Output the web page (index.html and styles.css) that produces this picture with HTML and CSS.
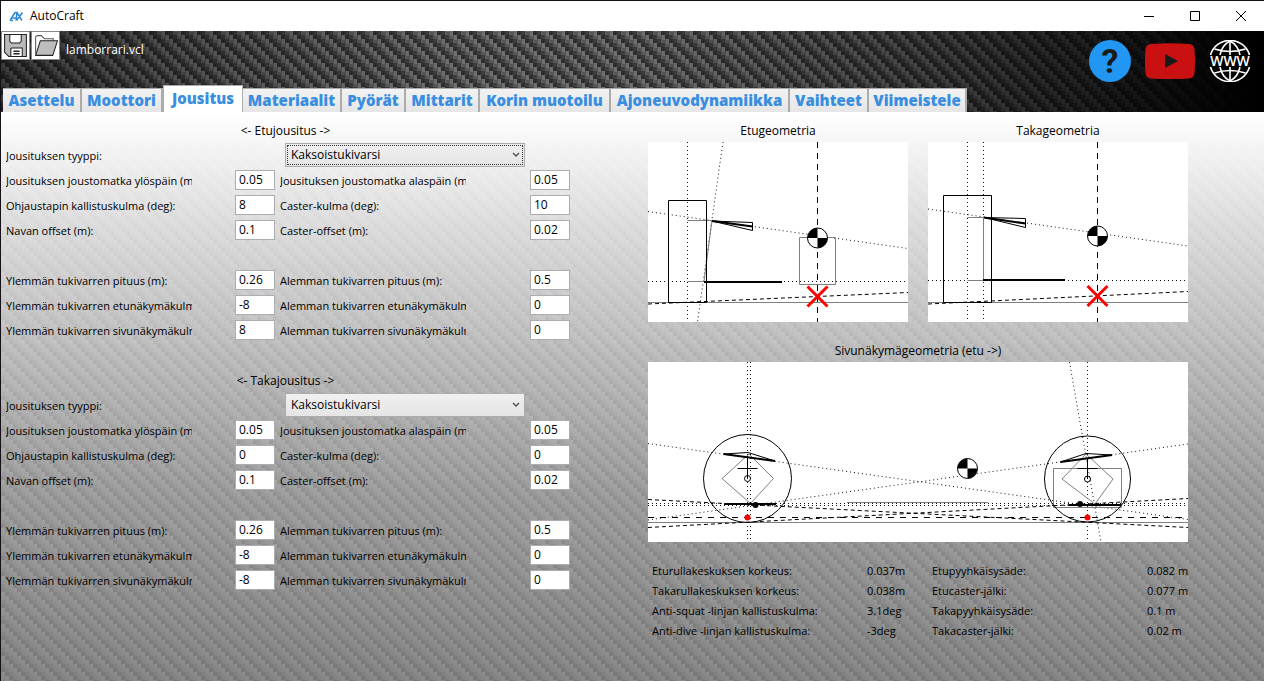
FILE: index.html
```html
<!DOCTYPE html>
<html lang="fi">
<head>
<meta charset="utf-8">
<meta name="viewport" content="width=device-width, initial-scale=1">
<title>AutoCraft</title>
<link rel="stylesheet" href="styles.css">
</head>
<body>
<div class="window">
  <div class="titlebar">
    <svg class="logo" viewBox="0 0 15 11" aria-hidden="true">
      <path d="M1 9.500 6 1.500H8L7 9.500M3 7H7.500M8 1.500 13 9.500M13.500 1.500 7.500 9.500M4 9.500H1" fill="none" stroke="#2f86d6" stroke-width="1.500"/>
    </svg>
    <span class="app-name">AutoCraft</span>
    <div class="window-buttons">
      <button type="button" aria-label="Pienennä"><svg viewBox="0 0 12 12"><path d="M1 6.500H11" /></svg></button>
      <button type="button" aria-label="Suurenna"><svg viewBox="0 0 12 12"><path d="M1.500 1.500H10.500V10.500H1.500Z"/></svg></button>
      <button type="button" aria-label="Sulje"><svg viewBox="0 0 12 12"><path d="M1 1 11 11M11 1 1 11"/></svg></button>
    </div>
  </div>

  <header class="header">
    <div class="toolbar">
      <button type="button" class="tool" aria-label="Tallenna">
        <svg viewBox="0 0 26 26"><path d="M2.500 2.500H23.500V23.500H6.500L2.500 19.500Z" fill="#b9b9b9" stroke="#222"/><path d="M7.500 2.500V9L9 10.500H17L18.500 9V2.500Z" fill="#fff" stroke="#222"/><path d="M8.500 23.500V16L9.500 15.500H19.500V23.500Z" fill="#fff" stroke="#222"/><path d="M11 18.500H17M11 21H17" stroke="#222" stroke-width="1.500"/></svg>
      </button>
      <button type="button" class="tool" aria-label="Avaa">
        <svg viewBox="0 0 26 26"><path d="M3.500 21V4.500L5 3.500H9L12 6.500H20.500V9" fill="#fff" stroke="#555"/><path d="M8 8.500H24.500L20 22.500H3.500Z" fill="#bdbdbd" stroke="#222"/></svg>
      </button>
      <span class="file-name">lamborrari.vcl</span>
      <nav class="links" aria-label="Linkit">
        <a href="#ohje" aria-label="Ohje"><svg width="42" height="42" viewBox="0 0 42 42"><circle cx="21" cy="21" r="21" fill="#2196f3"/><text class="question" x="21" y="33" text-anchor="middle">?</text></svg></a>
        <a href="#video" aria-label="Video"><svg width="50" height="42" viewBox="0 0 50 42"><path d="M6 4Q25 2.500 44 4Q49 4.500 49.500 9Q50.500 21 49.500 33Q49 38 44 38.500Q25 39.500 6 38.500Q1 38 .5 33Q-.5 21 .5 9Q1 4.500 6 4Z" fill="#c91111"/><path d="M20 14 33 21 20 28Z" fill="#1a1a1a"/></svg></a>
        <a href="#www" aria-label="WWW"><svg width="42" height="42" viewBox="0 0 42 42"><g fill="none" stroke="#fff" stroke-width="1.600"><path d="M1.500 15A20.300 20.300 0 0 1 40.500 15M1.500 27A20.300 20.300 0 0 0 40.500 27M21 1V15M21 27V41"/><path d="M11 15Q13 5 21 1Q29 5 31 15M11 27Q13 37 21 41Q29 37 31 27M5.500 9Q21 14 36.500 9M5.500 33Q21 28 36.500 33"/></g><text class="www" x="21" y="26" text-anchor="middle">WWW</text></svg></a>
      </nav>
    </div>
    <nav class="tabs" aria-label="Välilehdet">
      <button type="button">Asettelu</button>
      <button type="button">Moottori</button>
      <button type="button" class="active">Jousitus</button>
      <button type="button">Materiaalit</button>
      <button type="button">Pyörät</button>
      <button type="button">Mittarit</button>
      <button type="button">Korin muotoilu</button>
      <button type="button">Ajoneuvodynamiikka</button>
      <button type="button">Vaihteet</button>
      <button type="button">Viimeistele</button>
    </nav>
  </header>

  <main class="content">
    <div class="forms">
      <form class="form">
        <h2>&lt;- Etujousitus -&gt;</h2>
        <label for="f-type">Jousituksen tyyppi:</label>
        <div class="select focused"><select id="f-type"><option>Kaksoistukivarsi</option></select><svg viewBox="0 0 8 6"><path d="M1 1 4 4 7 1"/></svg></div>
        <label for="f1">Jousituksen joustomatka ylöspäin (m):</label><input id="f1" value="0.05">
        <label for="f2">Jousituksen joustomatka alaspäin (m):</label><input id="f2" value="0.05">
        <label for="f3">Ohjaustapin kallistuskulma (deg):</label><input id="f3" value="8">
        <label for="f4">Caster-kulma (deg):</label><input id="f4" value="10">
        <label for="f5">Navan offset (m):</label><input id="f5" value="0.1">
        <label for="f6">Caster-offset (m):</label><input id="f6" value="0.02">
        <div class="spacer"></div>
        <label for="f7">Ylemmän tukivarren pituus (m):</label><input id="f7" value="0.26">
        <label for="f8">Alemman tukivarren pituus (m):</label><input id="f8" value="0.5">
        <label for="f9">Ylemmän tukivarren etunäkymäkulma (deg):</label><input id="f9" value="-8">
        <label for="f10">Alemman tukivarren etunäkymäkulma (deg):</label><input id="f10" value="0">
        <label for="f11">Ylemmän tukivarren sivunäkymäkulma (deg):</label><input id="f11" value="8">
        <label for="f12">Alemman tukivarren sivunäkymäkulma (deg):</label><input id="f12" value="0">
      </form>
      <form class="form">
        <h2>&lt;- Takajousitus -&gt;</h2>
        <label for="r-type">Jousituksen tyyppi:</label>
        <div class="select"><select id="r-type"><option>Kaksoistukivarsi</option></select><svg viewBox="0 0 8 6"><path d="M1 1 4 4 7 1"/></svg></div>
        <label for="r1">Jousituksen joustomatka ylöspäin (m):</label><input id="r1" value="0.05">
        <label for="r2">Jousituksen joustomatka alaspäin (m):</label><input id="r2" value="0.05">
        <label for="r3">Ohjaustapin kallistuskulma (deg):</label><input id="r3" value="0">
        <label for="r4">Caster-kulma (deg):</label><input id="r4" value="0">
        <label for="r5">Navan offset (m):</label><input id="r5" value="0.1">
        <label for="r6">Caster-offset (m):</label><input id="r6" value="0.02">
        <div class="spacer"></div>
        <label for="r7">Ylemmän tukivarren pituus (m):</label><input id="r7" value="0.26">
        <label for="r8">Alemman tukivarren pituus (m):</label><input id="r8" value="0.5">
        <label for="r9">Ylemmän tukivarren etunäkymäkulma (deg):</label><input id="r9" value="-8">
        <label for="r10">Alemman tukivarren etunäkymäkulma (deg):</label><input id="r10" value="0">
        <label for="r11">Ylemmän tukivarren sivunäkymäkulma (deg):</label><input id="r11" value="-8">
        <label for="r12">Alemman tukivarren sivunäkymäkulma (deg):</label><input id="r12" value="0">
      </form>
    </div>

    <div class="views">
      <figure>
        <figcaption>Etugeometria</figcaption>
        <svg class="view" viewBox="0 0 260 180">
          <g class="dot"><path d="M39.500 0V180M75 0 49.500 180M0 69.500 260 106.500M0 139.500H260"/></g>
          <path class="thin" d="M0 160.500H260M39.500 78.500H64L56 139.500M39.500 139.500H56"/>
          <path class="line" d="M20.500 58.500H58.500V160.500H20.500Z"/>
          <path class="line" d="M64 79 104.500 80.500V88.500Z"/>
          <path class="thick" d="M64 79 104.500 84.500M56 140H134"/>
          <path class="dash" d="M0 162 260 150.500"/>
          <path class="dash long" d="M169.500 0V180"/>
          <path class="thin" d="M151.500 95.500H187.500V142.500H151.500Z"/>
          <circle class="disc" cx="169.500" cy="96" r="10"/><path d="M169.500 96V86A10 10 0 0 0 159.500 96ZM169.500 96V106A10 10 0 0 0 179.500 96Z"/>
          <path class="cross" d="M159.500 144.500 179.500 164.500M179.500 144.500 159.500 164.500"/>
        </svg>
      </figure>
      <figure>
        <figcaption>Takageometria</figcaption>
        <svg class="view" viewBox="0 0 260 180">
          <g class="dot"><path d="M39.500 0V180M55.500 0V180M0 67 260 104M0 138.500H260"/></g>
          <path class="thin" d="M0 160.500H260M39.500 75.500H55.500V138.500M39.500 138.500H56"/>
          <path class="line" d="M15.500 53.500H63.500V160.500H15.500Z"/>
          <path class="line" d="M56 75.500 97.500 76.500V85.500Z"/>
          <path class="thick" d="M56 75.500 97.500 81.500M55 138H137"/>
          <path class="dash" d="M0 162 260 149.500"/>
          <path class="dash long" d="M169.500 0V180"/>
          <circle class="disc" cx="169.500" cy="94" r="10"/><path d="M169.500 94V84A10 10 0 0 0 159.500 94ZM169.500 94V104A10 10 0 0 0 179.500 94Z"/>
          <path class="cross" d="M159.500 144 179.500 164M179.500 144 159.500 164"/>
        </svg>
      </figure>
      <figure class="wide">
        <figcaption>Sivunäkymägeometria (etu -&gt;)</figcaption>
        <svg class="view" viewBox="0 0 540 180">
          <path class="dot" d="M99.500 0V180M102.500 0V180M439.500 0V180M421.500 0 453 180M0 81.500 540 157.500M0 158 540 82M0 141.500H540M0 143.500H540"/>
          <path class="thin" d="M0 160.500H540M199 140.500H340M101 92 74 116.500 102.500 141.500 125.500 116.500ZM438 92 414 117 447 142 465 117ZM405.500 106.500H473.500V145.500H405.500Z"/>
          <path class="dash" d="M0 137.500 540 165.500M0 165.500 540 136.500"/>
          <path class="dash axis" d="M0 155.500H540"/>
          <circle class="line" cx="99.500" cy="116.500" r="44"/><circle class="line" cx="439.500" cy="117" r="43"/>
          <path class="line" d="M75.500 92 100 90.500 127 99M412.500 100 438 91.500 464 93M89.500 106.500H109.500M99.500 94V116M429.500 106.500H449.500M439.500 96V116"/>
          <circle class="line" cx="99.500" cy="116.500" r="3"/><circle class="line" cx="439.500" cy="117" r="3"/>
          <path class="thick" d="M75.500 92 127 99M76 142H128M412.500 100 464 93M420.500 143H473"/>
          <circle cx="107.500" cy="143" r="3"/><circle cx="432" cy="142" r="3"/>
          <circle class="red" cx="99.500" cy="155.500" r="3"/><circle class="red" cx="439.500" cy="155.500" r="3"/>
          <circle class="disc" cx="319.500" cy="106.500" r="10"/><path d="M319.500 106.500V96.500A10 10 0 0 0 309.500 106.500ZM319.500 106.500V116.500A10 10 0 0 0 329.500 106.500Z"/>
        </svg>
      </figure>
      <dl class="results">
        <dt>Eturullakeskuksen korkeus:</dt><dd>0.037m</dd><dt>Etupyyhkäisysäde:</dt><dd>0.082 m</dd>
        <dt>Takarullakeskuksen korkeus:</dt><dd>0.038m</dd><dt>Etucaster-jälki:</dt><dd>0.077 m</dd>
        <dt>Anti-squat -linjan kallistuskulma:</dt><dd>3.1deg</dd><dt>Takapyyhkäisysäde:</dt><dd>0.1 m</dd>
        <dt>Anti-dive -linjan kallistuskulma:</dt><dd>-3deg</dd><dt>Takacaster-jälki:</dt><dd>0.02 m</dd>
      </dl>
    </div>
  </main>
</div>
</body>
</html>
```

FILE: styles.css
```css
* { box-sizing: border-box; }

:root {
  --weave: url("data:image/svg+xml,%3Csvg xmlns='http://www.w3.org/2000/svg' width='16' height='16'%3E%3Cg fill='%23fff' fill-opacity='.14'%3E%3Cpath d='M0 0h4v8h-4zM4 4h4v8h-4zM8 8h4v8h-4zM12 12h4v4h-4zM12 0h4v4h-4z'/%3E%3Cpath d='M1 0h3v5h-3zM5 4h3v5h-3zM9 8h3v5h-3zM13 12h3v4h-3zM13 0h3v1h-3z'/%3E%3C/g%3E%3Cg fill='%23000' fill-opacity='.22'%3E%3Cpath d='M4 0h4v4h-4zM8 4h4v4h-4zM12 8h4v4h-4zM0 12h4v4h-4z'/%3E%3C/g%3E%3C/svg%3E");
}

body {
  margin: 0;
  font: 12px/20px "Open Sans", "Noto Sans", sans-serif;
  color: #000;
}

button, input, select { font: inherit; color: inherit; }

.window {
  min-height: 100vh;
  display: flex;
  flex-direction: column;
  border-top: 1px solid #15101a;
  border-left: 1px solid #15101a;
}

.titlebar {
  display: flex;
  align-items: center;
  height: 30px;
  padding-left: 8px;
  background: #fff;
}
.logo { width: 15px; height: 11px; }
.app-name { margin-left: 6px; }
.window-buttons { display: flex; margin-left: auto; }
.window-buttons button {
  display: grid;
  place-items: center;
  width: 46px;
  height: 30px;
  padding: 0;
  border: 0;
  background: none;
}
.window-buttons svg { width: 12px; height: 12px; fill: none; stroke: #000; }

.header {
  background:
    linear-gradient(90deg, rgba(0,0,0,.45) 0, rgba(0,0,0,.2) 20%, transparent 36%, transparent 50%, rgba(0,0,0,.4) 74%, rgba(0,0,0,.75) 88%, #000 99%),
    var(--weave),
    #3c3c3c;
}
.toolbar { display: flex; align-items: flex-start; height: 54px; padding-right: 13px; }
.tool {
  width: 29px;
  height: 29px;
  margin-right: 1px;
  padding: 0;
  border: 1px solid #888;
  background: #fff;
}
.tool svg { display: block; width: 27px; height: 27px; }
.file-name { margin: 9px 0 0 5px; color: #fff; }
.links { display: flex; gap: 14px; margin: 9px 0 0 auto; }
.links svg { display: block; }
.question { font: 700 34px Roboto, sans-serif; fill: #1a1a1a; }
.www { font: 600 14px "Open Sans", sans-serif; fill: #fff; }

.tabs {
  display: grid;
  grid-template-columns: 79px 81px 80px 99px 64px 74px 131px 179px 79px 98px;
  align-items: end;
  padding-left: 2px;
}
.tabs button {
  height: 24px;
  padding: 0 0 2px;
  border: 1px solid #acacac;
  border-width: 1px 2px 0 0;
  background: linear-gradient(#f2f2f2, #e6e6e6);
  color: #3a8ee0;
  font-size: 15px;
  font-weight: 800;
  line-height: 20px;
  white-space: nowrap;
}
.tabs .active { height: 27px; border-width: 1px 1px 0; background: #fff; }

.content {
  flex: 1;
  display: flex;
  align-items: flex-start;
  gap: 78px;
  padding: 6px 5px;
  background:
    linear-gradient(#fff 0, rgba(228,228,228,.9) 20%, rgba(200,200,200,.8) 42%, rgba(165,165,165,.72) 66%, rgba(134,134,134,.68) 100%),
    var(--weave),
    linear-gradient(#8c8c8c, #707070);
}

.form {
  display: grid;
  grid-template-columns: 229px 45px 250px 40px;
  grid-auto-rows: 25px;
  align-items: start;
}
.form + .form { margin-top: 25px; }
.form h2 {
  grid-column: 1 / -1;
  margin: 3px 5px 0 0;
  font-size: 12px;
  font-weight: 400;
  line-height: 20px;
  text-align: center;
}
.form label {
  width: 186px;
  margin-top: 3px;
  overflow: hidden;
  font-size: 11px;
  white-space: nowrap;
}
.form input {
  width: 40px;
  height: 20px;
  margin-top: 2px;
  padding: 0 3px;
  border: 1px solid #abadb3;
  background: #fff;
}
.spacer { grid-column: 1 / -1; }
.select { position: relative; grid-column: 3 / -1; width: 240px; margin-left: 5px; }
.select select {
  appearance: none;
  display: block;
  width: 100%;
  height: 24px;
  padding: 0 5px;
  border: 1px solid #acacac;
  border-radius: 0;
  background: linear-gradient(#f0f0f0, #e5e5e5);
}
.focused select { outline: 1px dotted #333; outline-offset: -3px; }
.select svg {
  position: absolute;
  right: 5px;
  top: 9px;
  width: 8px;
  height: 6px;
  fill: none;
  stroke: #555;
  stroke-width: 1.5;
  pointer-events: none;
}

.views { display: grid; grid-template-columns: 260px 260px; column-gap: 20px; }
.views figure { margin: 0 0 16px; }
.wide { grid-column: 1 / -1; }
.views figcaption { height: 24px; line-height: 26px; text-align: center; }
.view { display: block; width: 100%; background: #fff; }
.dot, .dash, .thin, .line, .thick, .cross { fill: none; stroke: #000; }
.dot { stroke-dasharray: 1 3; stroke: #111; }
.dash { stroke-dasharray: 4 3; }
.long { stroke-dasharray: 6 5; }
.axis { stroke-dasharray: 6 6; }
.thin { stroke: #808080; }
.thick { stroke-width: 2; }
.cross { stroke: #f00; stroke-width: 3; }
.disc { fill: #fff; stroke: #000; }
.red { fill: #f00; }

.results {
  grid-column: 1 / -1;
  display: grid;
  grid-template-columns: 215px 65px 215px 60px;
  margin: 3px -20px 0 4px;
  font-size: 11px;
}
.results dd { margin: 0; }
```
